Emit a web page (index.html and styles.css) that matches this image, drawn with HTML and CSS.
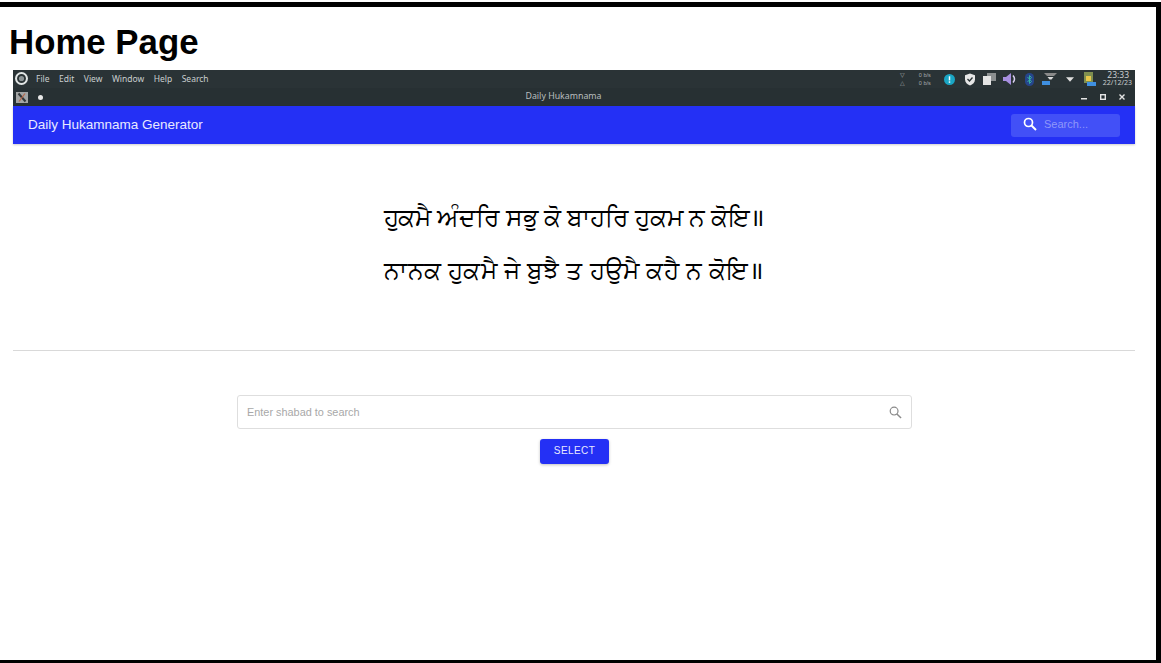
FILE: index.html
```html
<!DOCTYPE html>
<html lang="en">
<head>
  <meta charset="UTF-8" />
  <title>Home Page</title>
  <link rel="stylesheet" href="styles.css">
</head>
<body>
  <div class="frame">
    <h1 class="page-title">Home Page</h1>
    <div class="shot">
      <div class="desktop-bar">
        <div class="menu">
          <svg class="logo" width="13" height="13" viewBox="0 0 14 14"><circle cx="7" cy="7" r="7" fill="#e2e6e6"/><circle cx="7" cy="7" r="3.800" fill="#8d9597" stroke="#2b3436" stroke-width="2"/></svg>
          <span>File</span><span>Edit</span><span>View</span><span>Window</span><span>Help</span><span>Search</span>
        </div>
        <div class="tray">
          <div class="arrows"><span>▽</span><span>△</span></div>
          <div class="net"><span>0 b/s</span><span>0 b/s</span></div>
          <div class="tray-icons">
            <span class="tray-icon"><svg width="11" height="11" viewBox="0 0 12 12"><circle cx="6" cy="6" r="6" fill="#1aa5c4"/><rect x="5.200" y="2.500" width="1.600" height="4.500" fill="#fff"/><rect x="5.200" y="8" width="1.600" height="1.600" fill="#fff"/></svg></span>
            <span class="tray-icon"><svg width="12" height="13" viewBox="0 0 12 13"><path d="M6 0.500 11 2.200V6.500C11 9.500 8.800 11.500 6 12.500 3.200 11.500 1 9.500 1 6.500V2.200Z" fill="#e6e6e6"/><path d="M3.500 6 5.500 8 8.500 4.500" fill="none" stroke="#2b3436" stroke-width="1.300"/></svg></span>
            <span class="tray-icon"><svg width="13" height="12" viewBox="0 0 13 12"><rect x="4" y="0" width="9" height="8" fill="#8b8f90"/><rect x="0" y="3" width="8" height="9" fill="#e4e4e4"/></svg></span>
            <span class="tray-icon"><svg width="14" height="12" viewBox="0 0 14 12"><path d="M0 4H3L8 0V12L3 8H0Z" fill="#a78fe0"/><path d="M10 2.500Q13 6 10 9.500" fill="none" stroke="#d8d0f0" stroke-width="1.500"/></svg></span>
            <span class="tray-icon"><svg width="9" height="13" viewBox="0 0 9 13"><rect x="0" y="0" width="9" height="13" rx="4.500" fill="#26458c"/><path d="M2.500 4 6.500 8.500 4.500 10.500V2.500L6.500 4.500 2.500 9" fill="none" stroke="#35b0a0"/></svg></span>
            <span class="tray-icon"><svg width="16" height="12" viewBox="0 0 16 12"><path d="M2 0H15L12 3H5Z" fill="#8a8a8a"/><path d="M5.500 4H11.500L9.500 6.500H7.500Z" fill="#dcdcdc"/><rect x="0" y="8" width="8" height="4" fill="#3f8fe0"/></svg></span>
            <span class="tray-icon"><svg width="8" height="5" viewBox="0 0 9 5"><path d="M0 0H9L4.500 5Z" fill="#e0e0e0"/></svg></span>
            <span class="tray-icon"><svg width="13" height="14" viewBox="0 0 13 14"><rect x="1" y="0" width="9" height="11" fill="#7f8f50"/><rect x="3" y="4" width="5" height="5" fill="#e8c84a"/><rect x="4" y="10" width="9" height="4" fill="#3f8fe0"/></svg></span>
          </div>
          <div class="clock"><span class="time">23:33</span><span class="date">22/12/23</span></div>
        </div>
      </div>
      <div class="title-bar">
        <div class="title-left">
          <svg class="x-icon" width="12" height="11" viewBox="0 0 12 11"><rect width="12" height="11" fill="#a3a5a5"/><path d="M2.500 1.500 9.500 9.500" stroke="#33393b" stroke-width="2"/><path d="M9 1.500 3 9.500" stroke="#b5674a" stroke-width="1.200"/></svg>
          <span class="dot"></span>
        </div>
        <span class="win-title">Daily Hukamnama</span>
        <div class="win-btns">
          <svg width="6" height="6" viewBox="0 0 6 6"><rect x="0" y="4" width="6" height="1.500" fill="#e4e4e4"/></svg>
          <svg width="6" height="6" viewBox="0 0 6 6"><rect x="0.700" y="0.700" width="4.600" height="4.600" fill="none" stroke="#e4e4e4" stroke-width="1.400"/></svg>
          <svg width="6" height="6" viewBox="0 0 6 6"><path d="M0.500 0.500 5.500 5.500M5.500 0.500 0.500 5.500" stroke="#e4e4e4" stroke-width="1.400"/></svg>
        </div>
      </div>
      <header class="app-bar">
        <span class="app-name">Daily Hukamnama Generator</span>
        <div class="app-search">
          <svg width="14" height="14" viewBox="0 0 14 14"><circle cx="5.500" cy="5.500" r="4" fill="none" stroke="#fff" stroke-width="1.700"/><path d="M8.500 8.500 13 13" stroke="#fff" stroke-width="1.900"/></svg>
          <span>Search...</span>
        </div>
      </header>
      <section class="verse" lang="pa">
        <p class="line-one">ਹੁਕਮੈ ਅੰਦਰਿ ਸਭੁ ਕੋ ਬਾਹਰਿ ਹੁਕਮ ਨ ਕੋਇ॥</p>
        <p class="line-two">ਨਾਨਕ ਹੁਕਮੈ ਜੇ ਬੁਝੈ ਤ ਹਉਮੈ ਕਹੈ ਨ ਕੋਇ॥</p>
      </section>
      <hr class="divider">
      <section class="finder">
        <div class="search-box">
          <span>Enter shabad to search</span>
          <svg width="13" height="13" viewBox="0 0 14 14"><circle cx="5.500" cy="5.500" r="4.200" fill="none" stroke="#8a8a8a" stroke-width="1.300"/><path d="M8.500 8.500 13 13" stroke="#8a8a8a" stroke-width="1.500"/></svg>
        </div>
        <button class="select-btn">SELECT</button>
      </section>
    </div>
  </div>
</body>
</html>
```

FILE: styles.css
```css
* { box-sizing: border-box; }
html, body {
  margin: 0;
  height: 100%;
}
body {
  font-family: "Liberation Sans", Arial, sans-serif;
  background: #fff;
  overflow: hidden;
  padding-top: 2px;
}
.frame {
  height: 100%;
  border-style: solid;
  border-color: #000;
  border-width: 5px 5px 3px 0;
  padding: 0 21px 0 13px;
}
.page-title {
  margin: 0 0 0 -4px;
  height: 63px;
  padding-top: 15px;
  font-size: 34.800px;
  line-height: 40px;
  font-weight: bold;
  color: #000;
}
.shot {
  display: flex;
  flex-direction: column;
}
.desktop-bar {
  height: 18px;
  background: #2a3336;
  display: flex;
  align-items: center;
  justify-content: space-between;
  padding: 0 3px 0 2px;
}
.menu {
  display: flex;
  align-items: center;
  gap: 9.500px;
  padding-bottom: 1px;
  font-family: "Noto Sans", sans-serif;
  font-size: 8.500px;
  color: #c9cecf;
}
.logo { margin-right: -1.500px; }
.tray {
  display: flex;
  align-items: center;
}
.arrows {
  display: flex;
  flex-direction: column;
  font-size: 6px;
  line-height: 8px;
  color: #a8adae;
  margin-right: 14px;
}
.net {
  display: flex;
  flex-direction: column;
  font-size: 5.500px;
  line-height: 8px;
  color: #a8adae;
  margin-right: 9px;
}
.tray-icons { display: flex; }
.tray-icon {
  width: 20px;
  display: flex;
  align-items: center;
  justify-content: center;
}
.clock {
  display: flex;
  flex-direction: column;
  align-items: flex-end;
  margin-left: 3px;
  font-family: "Noto Sans", sans-serif;
  color: #c9cecf;
}
.clock .time {
  font-size: 8.500px;
  line-height: 8px;
  margin-right: 3px;
}
.clock .date {
  font-size: 7px;
  line-height: 8px;
}
.title-bar {
  height: 18px;
  background: #273033;
  display: grid;
  grid-template-columns: 1fr auto 1fr;
  align-items: center;
  padding: 0 10px 0 3px;
}
.title-left {
  display: flex;
  align-items: center;
  gap: 10px;
}
.dot {
  width: 5px;
  height: 5px;
  border-radius: 50%;
  background: #e8e8e8;
}
.win-title {
  margin-right: 14px;
  padding-bottom: 2px;
  font-family: "Noto Sans", sans-serif;
  font-size: 8.800px;
  color: #b9bebf;
}
.win-btns {
  display: flex;
  justify-content: flex-end;
  gap: 13px;
}
.app-bar {
  height: 38px;
  background: #2430f5;
  display: flex;
  align-items: center;
  justify-content: space-between;
  padding: 0 15px 0 15px;
  box-shadow: 0 1px 2px rgba(0,0,0,0.2);
}
.app-name {
  padding-bottom: 2px;
  font-size: 13.500px;
  color: #e8e9ff;
}
.app-search {
  width: 109px;
  height: 23px;
  background: #4250f7;
  border-radius: 3px;
  display: flex;
  align-items: center;
  gap: 7px;
  padding: 0 0 2px 12px;
  font-size: 11px;
  color: #8f97fa;
}
.verse {
  height: 206px;
  padding-top: 46px;
  text-align: center;
  font-family: "Noto Sans", "Liberation Sans", sans-serif;
  font-size: 24.700px;
  line-height: 53px;
  color: #000;
}
.verse p { margin: 0; }
.verse .line-one { letter-spacing: -0.150px; }
.verse .line-two { letter-spacing: 0.350px; }
.divider {
  margin: 0;
  border: none;
  height: 1px;
  background: #d9d9d9;
}
.finder {
  padding-top: 44px;
  display: flex;
  flex-direction: column;
  align-items: center;
}
.search-box {
  width: 675px;
  height: 34px;
  margin-left: 1px;
  border: 1px solid #dedede;
  border-radius: 3px;
  display: flex;
  align-items: center;
  justify-content: space-between;
  padding: 0 9px 0 9px;
  font-size: 10.900px;
  color: #a8a8a8;
}
.select-btn {
  margin: 10px 0 0 1px;
  width: 69px;
  height: 25px;
  padding: 0 0 2px;
  border: none;
  border-radius: 3px;
  background: #2430f5;
  color: #e8e9ff;
  font-family: inherit;
  font-size: 10px;
  letter-spacing: 0.400px;
  box-shadow: 0 1px 3px rgba(0,0,0,0.25);
}
```
